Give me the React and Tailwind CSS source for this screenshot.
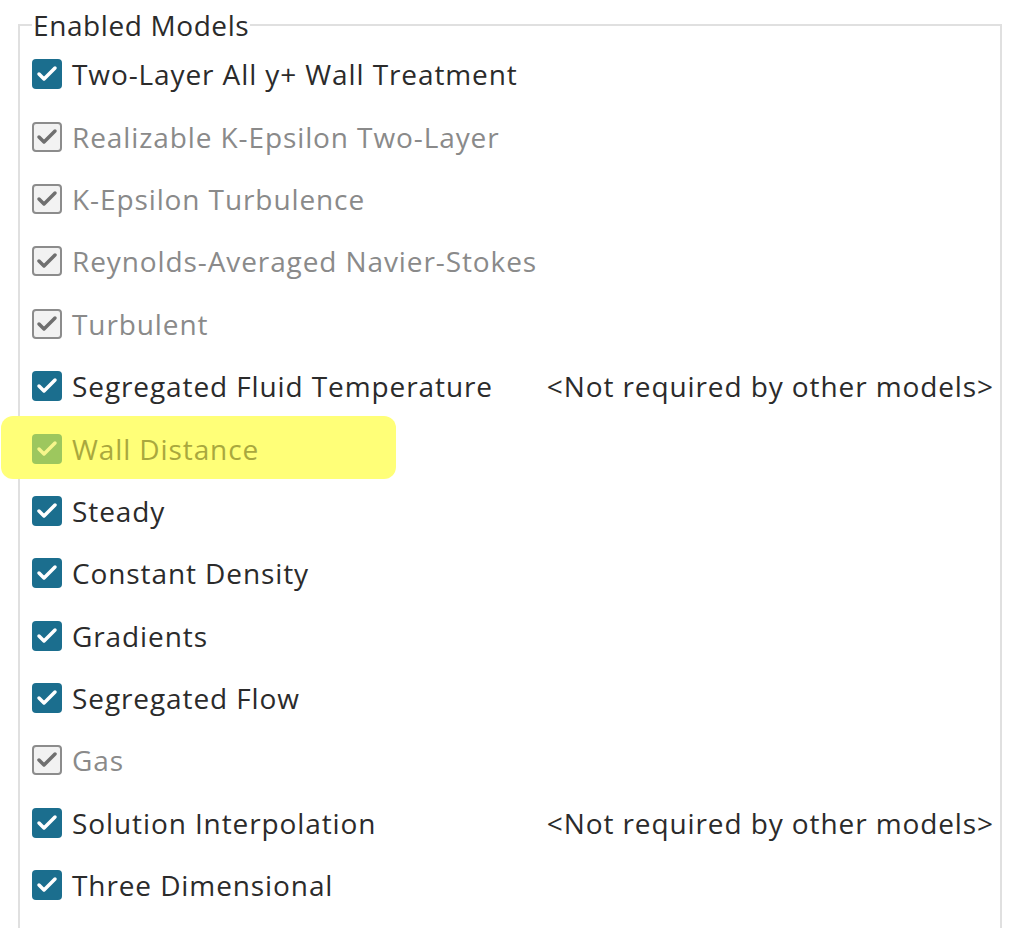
import { Check } from 'lucide-react';

const MODELS = [
  { name: 'Two-Layer All y+ Wall Treatment', active: true },
  { name: 'Realizable K-Epsilon Two-Layer', active: false },
  { name: 'K-Epsilon Turbulence', active: false },
  { name: 'Reynolds-Averaged Navier-Stokes', active: false },
  { name: 'Turbulent', active: false },
  { name: 'Segregated Fluid Temperature', active: true, note: true },
  { name: 'Wall Distance', active: false, highlight: true },
  { name: 'Steady', active: true },
  { name: 'Constant Density', active: true },
  { name: 'Gradients', active: true },
  { name: 'Segregated Flow', active: true },
  { name: 'Gas', active: false },
  { name: 'Solution Interpolation', active: true, note: true },
  { name: 'Three Dimensional', active: true },
];

const Box = ({ active, highlight }) => {
  if (highlight)
    return (
      <span className="flex h-[30px] w-[30px] shrink-0 items-center justify-center rounded-[4px] bg-[#9dc75e]">
        <Check size={24} strokeWidth={3.5} className="text-[#f6f68c]" />
      </span>
    );
  return (
    <span
      className={`flex h-[30px] w-[30px] shrink-0 items-center justify-center rounded-[4px] ${
        active ? 'bg-[#1b6e8e]' : 'border-2 border-[#8c8c8c] bg-[#f2f2f2]'
      }`}
    >
      <Check size={24} strokeWidth={3.5} className={active ? 'text-white' : 'text-[#6f6f6f]'} />
    </span>
  );
};

const Row = ({ m }) => (
  <div className="relative flex h-[62.4px] items-center justify-between">
    {m.highlight && (
      <span className="absolute left-[-31px] top-[-1px] h-[63px] w-[395px] rounded-[12px] bg-[#ffff78]" />
    )}
    <div className="relative flex items-center gap-[10px]">
      <Box active={m.active} highlight={m.highlight} />
      <span className={m.highlight ? 'text-[#a9a83e]' : m.active ? 'text-[#2b2b2b]' : 'text-[#8a8a8a]'}>
        {m.name}
      </span>
    </div>
    {m.note && <span className="pr-[4px] text-[#2b2b2b]">&lt;Not required by other models&gt;</span>}
  </div>
);

export default function App() {
  return (
    <div className="h-[928px] w-[1024px] overflow-hidden bg-white pl-[18px] pr-[22px] pt-[10px] font-['Open_Sans',sans-serif] text-[28px] tracking-[0.9px]">
      <fieldset className="h-[940px] border-2 border-[#e0e0e0] pl-[12px] pr-[2px]">
        <legend className="px-[1px] text-[#2b2b2b] leading-[30px] tracking-[0.6px]">Enabled Models</legend>
        <div className="mt-[3px] flex flex-col">
          {MODELS.map((m) => (
            <Row key={m.name} m={m} />
          ))}
        </div>
      </fieldset>
    </div>
  );
}
